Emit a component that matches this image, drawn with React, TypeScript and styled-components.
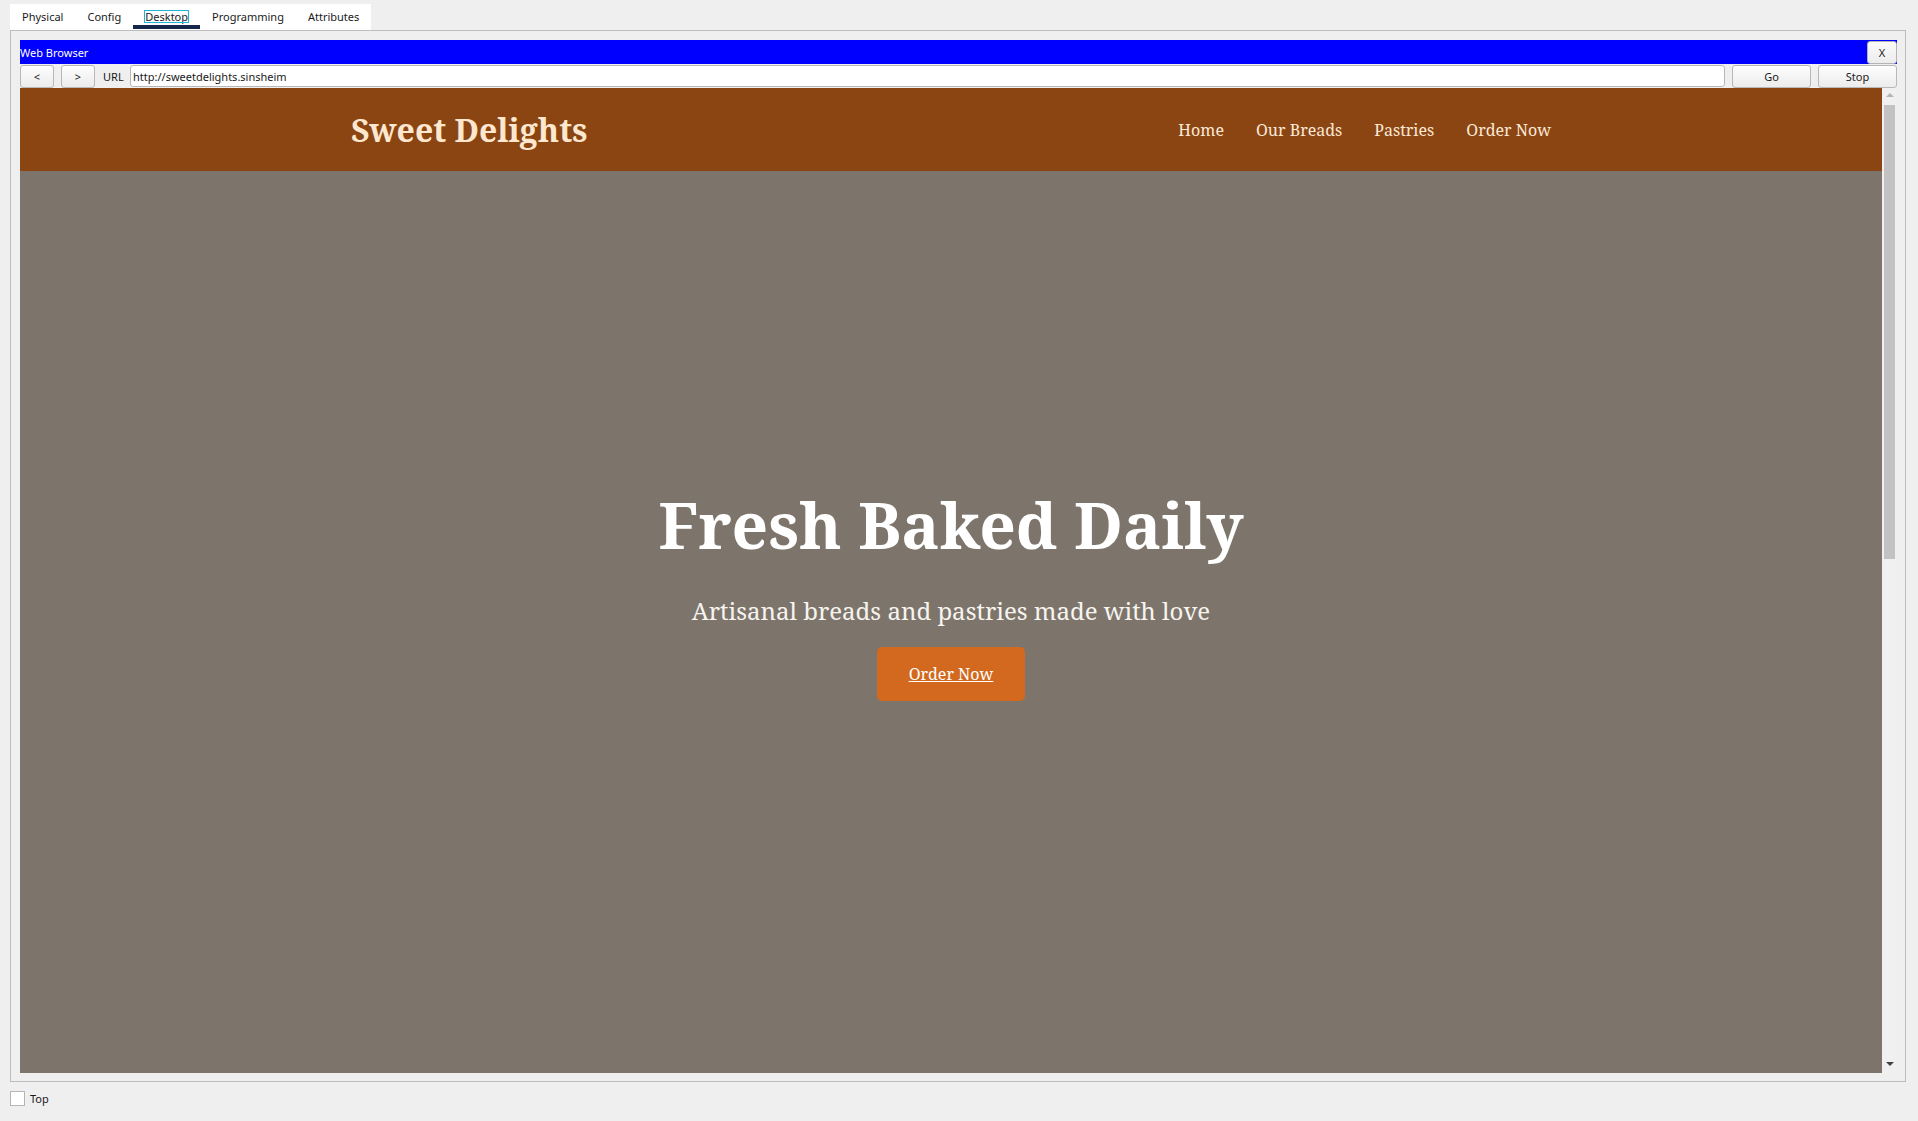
import React from 'react';
import styled, {createGlobalStyle} from 'styled-components';

const GlobalStyle = createGlobalStyle`
  html, body {
    margin: 0;
    padding: 0;
    background: #efefef;
  }
  body {
    font-family: "Noto Sans", "Open Sans", sans-serif;
    font-size: 11px;
    color: #1a1a1a;
  }
`;

const Screen = styled.div`
  width: 1918px;
  height: 1121px;
  display: flex;
  flex-direction: column;
  overflow: hidden;
`;

const TabBar = styled.div`
  display: flex;
  align-self: flex-start;
  margin: 4px 0 0 10px;
  height: 26px;
  background: #ffffff;
`;

const Tab = styled.div<{$active?: boolean}>`
  display: flex;
  align-items: center;
  box-sizing: border-box;
  height: 25px;
  padding: 3px 12px 0;
  color: #1a1a1a;
  border-bottom: 4px solid ${p => (p.$active ? '#15284a' : 'transparent')};
`;

const TabLabel = styled.span<{$focus?: boolean}>`
  line-height: 11px;
  outline: ${p => (p.$focus ? '1px solid #1eb4d8' : 'none')};
  outline-offset: 0;
`;

const Panel = styled.div`
  margin: 0 12px 0 10px;
  border: 1px solid #bdbdbd;
  padding: 9px 8px 8px 9px;
  display: flex;
  flex-direction: column;
`;

const TitleBar = styled.div`
  height: 24px;
  background: #0000ff;
  display: flex;
  align-items: center;
  justify-content: space-between;
  color: #ffffff;
`;

const CloseButton = styled.button`
  width: 30px;
  height: 23px;
  margin: 0;
  border: 1px solid #b4b4b4;
  border-radius: 3px;
  background: linear-gradient(#fbfbfb, #ececec);
  font: inherit;
  color: #1a1a1a;
  padding: 0;
`;

const UrlRow = styled.div`
  height: 24px;
  display: flex;
  align-items: center;
  background: #efefef;
`;

const NavButton = styled.button<{$width: number; $last?: boolean}>`
  width: ${p => p.$width}px;
  height: 23px;
  margin: 0 ${p => (p.$last ? 0 : 7)}px 0 0;
  border: 1px solid #b8b8b8;
  border-radius: 3px;
  background: linear-gradient(#fdfdfd, #ececec);
  font: inherit;
  color: #1a1a1a;
  padding: 0;
`;

const UrlLabel = styled.span`
  width: 27px;
  padding-left: 1px;
`;

const UrlInput = styled.div`
  flex: 1;
  height: 22px;
  margin-right: 7px;
  background: #ffffff;
  border: 1px solid #b8b8b8;
  border-radius: 3px;
  display: flex;
  align-items: center;
  padding-left: 2px;
  box-sizing: border-box;
`;

const Viewport = styled.div`
  height: 985px;
  display: flex;
  background: #f0f0f0;
`;

const Page = styled.div`
  flex: 1;
  overflow: hidden;
  background: #7d756b;
  font-family: "Noto Serif", "DejaVu Serif", serif;
`;

const Header = styled.header`
  background: #8b4513;
  padding: 20px 0;
`;

const HeaderInner = styled.div`
  max-width: 1200px;
  margin: 0 auto;
  display: flex;
  justify-content: space-between;
  align-items: center;
`;

const Logo = styled.h1`
  margin: 0;
  font-size: 32px;
  font-weight: 700;
  color: #fde8cf;
`;

const Nav = styled.nav`
  display: flex;
  gap: 32px;
`;

const NavItem = styled.a`
  font-size: 16px;
  color: #fbe9d6;
  text-decoration: none;
`;

const Hero = styled.section`
  height: 840px;
  background: #7d756b;
  display: flex;
  flex-direction: column;
  align-items: center;
  justify-content: center;
  text-align: center;
`;

const HeroTitle = styled.h2`
  margin: 0 0 26px;
  font-size: 64px;
  font-weight: 700;
  color: #ffffff;
`;

const HeroText = styled.p`
  margin: 0 0 20px;
  font-size: 24px;
  color: #f7f4f0;
`;

const CtaButton = styled.a`
  display: inline-block;
  background: #d2691e;
  color: #ffffff;
  font-size: 16px;
  padding: 16px 32px;
  border-radius: 5px;
  text-decoration: underline;
`;

const ScrollBar = styled.div`
  width: 15px;
  display: flex;
  flex-direction: column;
  align-items: center;
  background: #f0f0f0;
`;

const Arrow = styled.div<{$up?: boolean}>`
  width: 0;
  height: 0;
  margin: ${p => (p.$up ? '5px 0 8px' : 'auto 0 7px')};
  border-left: 4px solid transparent;
  border-right: 4px solid transparent;
  ${p => (p.$up ? 'border-bottom: 4px solid #b5b5b5;' : 'border-top: 4px solid #404040;')}
`;

const Thumb = styled.div`
  width: 11px;
  height: 454px;
  background: #c2c2c2;
`;

const Footer = styled.div`
  display: flex;
  align-items: center;
  gap: 5px;
  margin: 9px 0 0 10px;
`;

const CheckBox = styled.span`
  width: 13px;
  height: 13px;
  background: #ffffff;
  border: 1px solid #b5b5b5;
`;

const tabs = ['Physical', 'Config', 'Desktop', 'Programming', 'Attributes'];
const links = ['Home', 'Our Breads', 'Pastries', 'Order Now'];

const App: React.FC = () => {
    return (
        <Screen>
            <GlobalStyle />
            <TabBar>
                {tabs.map(t => (
                    <Tab key={t} $active={t === 'Desktop'}>
                        <TabLabel $focus={t === 'Desktop'}>{t}</TabLabel>
                    </Tab>
                ))}
            </TabBar>
            <Panel>
                <TitleBar>
                    <span>Web Browser</span>
                    <CloseButton>X</CloseButton>
                </TitleBar>
                <UrlRow>
                    <NavButton $width={34}>&lt;</NavButton>
                    <NavButton $width={34}>&gt;</NavButton>
                    <UrlLabel>URL</UrlLabel>
                    <UrlInput>http://sweetdelights.sinsheim</UrlInput>
                    <NavButton $width={79}>Go</NavButton>
                    <NavButton $width={79} $last>Stop</NavButton>
                </UrlRow>
                <Viewport>
                    <Page>
                        <Header>
                            <HeaderInner>
                                <Logo>Sweet Delights</Logo>
                                <Nav>
                                    {links.map(l => (
                                        <NavItem key={l} href="#">{l}</NavItem>
                                    ))}
                                </Nav>
                            </HeaderInner>
                        </Header>
                        <Hero>
                            <HeroTitle>Fresh Baked Daily</HeroTitle>
                            <HeroText>Artisanal breads and pastries made with love</HeroText>
                            <CtaButton href="#">Order Now</CtaButton>
                        </Hero>
                    </Page>
                    <ScrollBar>
                        <Arrow $up />
                        <Thumb />
                        <Arrow />
                    </ScrollBar>
                </Viewport>
            </Panel>
            <Footer>
                <CheckBox />
                <span>Top</span>
            </Footer>
        </Screen>
    );
};

export default App;
